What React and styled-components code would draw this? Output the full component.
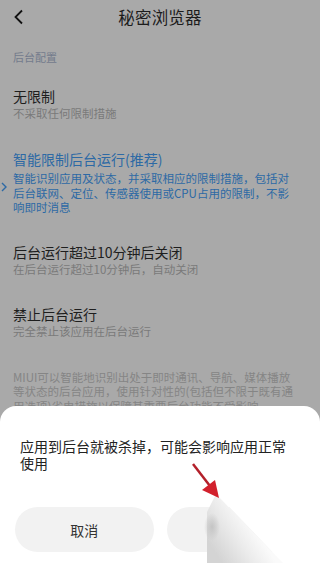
import React from "react";
import styled, { createGlobalStyle } from "styled-components";

const Global = createGlobalStyle`
  html, body { margin: 0; padding: 0; background: #a9a9a9; }
  body { font-family: "Noto Sans CJK SC", "Noto Sans", sans-serif; }
  #root { width: 320px; height: 563px; overflow: hidden; }
`;

const Screen = styled.div`
  position: relative;
  width: 320px;
  height: 563px;
  background: #a9a9a9;
  overflow: hidden;
`;

const Header = styled.div`
  height: 34px;
  display: flex;
  align-items: center;
  justify-content: center;
  position: relative;
`;

const Back = styled.svg`
  position: absolute;
  left: 13px;
  top: 9px;
`;

const Title = styled.div`
  font-size: 16.5px;
  color: #1c1c1c;
  letter-spacing: 0.2px;
`;

const Content = styled.div`
  padding: 0 13px;
  display: flex;
  flex-direction: column;
  flex-shrink: 0;
`;

const Section = styled.div`
  font-size: 11px;
  color: #737b8c;
  margin-top: 15px;
  line-height: 16px;
`;

const Option = styled.div`
  position: relative;
  display: flex;
  flex-direction: column;
  flex-shrink: 0;
  margin-top: ${(p) => p.$mt}px;
`;

const OptTitle = styled.div`
  font-size: 14px;
  line-height: 18px;
  color: ${(p) => (p.$blue ? "#2d69a5" : "#1e1e1e")};
`;

const OptDesc = styled.div`
  font-size: 11.5px;
  line-height: ${(p) => (p.$blue ? "14.5px" : "16px")};
  color: ${(p) => (p.$blue ? "#2d69a5" : "#7a7a7a")};
  margin-top: ${(p) => (p.$blue ? 3 : 0)}px;
  width: ${(p) => (p.$blue ? 280 : 290)}px;
`;

const Chevron = styled.svg`
  position: absolute;
  left: -12px;
  top: 32px;
`;

const Para = styled.p`
  flex-shrink: 0;
  margin: 0;
  padding-top: 31px;
  font-size: 11.5px;
  line-height: 14.5px;
  color: #858585;
  width: 282px;
`;

const Sheet = styled.div`
  position: absolute;
  left: 0;
  right: 0;
  top: 406px;
  bottom: 0;
  background: #fff;
  border-radius: 16px 16px 0 0;
  padding: 32px 20px 0 20px;
  display: flex;
  flex-direction: column;
`;

const SheetText = styled.div`
  font-size: 14px;
  line-height: 17px;
  color: #222;
  width: 272px;
`;

const Buttons = styled.div`
  margin-top: 35px;
  margin-left: -5px;
  margin-right: -5px;
  display: grid;
  grid-template-columns: 1fr 1fr;
  gap: 13px;
`;

const Btn = styled.div`
  height: 45px;
  border-radius: 23px;
  background: #f2f2f2;
  display: flex;
  align-items: center;
  justify-content: center;
  font-size: 14px;
  color: #333;
`;

const Smear = styled.svg`
  position: absolute;
  left: 0;
  top: 0;
  pointer-events: none;
`;

export default function App() {
  return (
    <>
      <Global />
      <Screen>
        <Header>
          <Back width="12" height="16" viewBox="0 0 12 16">
            <path d="M9 1.5 L2.5 8 L9 14.5" fill="none" stroke="#111" strokeWidth="1.8" />
          </Back>
          <Title>秘密浏览器</Title>
        </Header>
        <Content>
          <Section>后台配置</Section>
          <Option $mt={22}>
            <OptTitle>无限制</OptTitle>
            <OptDesc>不采取任何限制措施</OptDesc>
          </Option>
          <Option $mt={29}>
            <Chevron width="6" height="10" viewBox="0 0 6 10">
              <path d="M1 1 L5 5 L1 9" fill="none" stroke="#2d69a5" strokeWidth="1.4" />
            </Chevron>
            <OptTitle $blue>智能限制后台运行(推荐)</OptTitle>
            <OptDesc $blue>
              智能识别应用及状态，并采取相应的限制措施，包括对后台联网、定位、传感器使用或CPU占用的限制，不影响即时消息
            </OptDesc>
          </Option>
          <Option $mt={28}>
            <OptTitle>后台运行超过10分钟后关闭</OptTitle>
            <OptDesc>在后台运行超过10分钟后，自动关闭</OptDesc>
          </Option>
          <Option $mt={28}>
            <OptTitle>禁止后台运行</OptTitle>
            <OptDesc>完全禁止该应用在后台运行</OptDesc>
          </Option>
          <Para>
            MIUI可以智能地识别出处于即时通讯、导航、媒体播放等状态的后台应用，使用针对性的(包括但不限于既有通用选项)省电措施以保障其重要后台功能不受影响
          </Para>
        </Content>
        <Sheet>
          <SheetText>应用到后台就被杀掉，可能会影响应用正常使用</SheetText>
          <Buttons>
            <Btn>取消</Btn>
            <Btn />
          </Buttons>
        </Sheet>
        <Smear width="320" height="563" viewBox="0 0 320 563">
          <defs>
            <linearGradient id="sh" x1="207" y1="540" x2="245" y2="515" gradientUnits="userSpaceOnUse">
              <stop offset="0" stopColor="#d4d4d4" />
              <stop offset="0.6" stopColor="#ececec" />
              <stop offset="1" stopColor="#fafafa" />
            </linearGradient>
            <radialGradient id="bl" cx="0.5" cy="0.5" r="0.5">
              <stop offset="0" stopColor="#c4c4c4" />
              <stop offset="1" stopColor="#c4c4c4" stopOpacity="0" />
            </radialGradient>
          </defs>
          <polygon points="215,492 320,492 320,563 283,563" fill="#fff" />
          <polygon points="207,512 216,494 283,563 207,563" fill="url(#sh)" />
          <ellipse cx="212" cy="527" rx="8" ry="14" fill="url(#bl)" />
          <line x1="193" y1="464" x2="210" y2="486" stroke="#b3202a" strokeWidth="2.5" />
          <polygon points="202,490 215,480 219,498" fill="#d2202c" />
        </Smear>
      </Screen>
    </>
  );
}
